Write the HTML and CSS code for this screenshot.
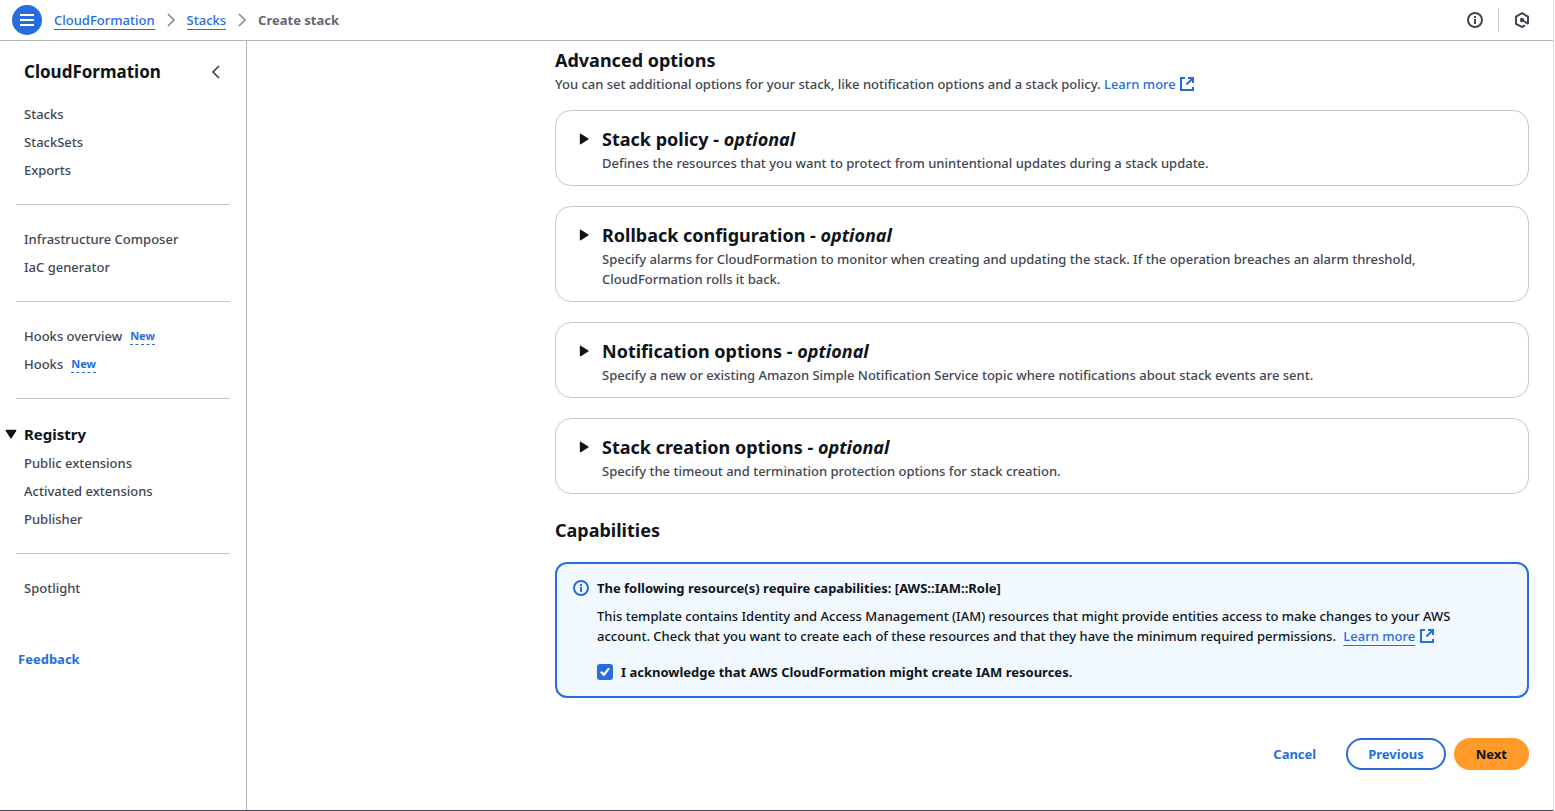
FILE: index.html
```html
<!DOCTYPE html>
<html lang="en">
<head>
<meta charset="utf-8">
<title>Create stack - CloudFormation</title>
<link rel="stylesheet" href="styles.css">
</head>
<body>
<svg class="sprite" aria-hidden="true">
  <symbol id="external" viewBox="0 0 16 16"><path d="M6 2H2v12h12v-3M9 2h5v5M14 2L7.500 8.500" fill="none" stroke="currentColor" stroke-width="2"/></symbol>
  <symbol id="info" viewBox="0 0 16 16"><circle cx="8" cy="8" r="7" fill="none" stroke="currentColor" stroke-width="2"/><path d="M8 7v5M8 4v2" fill="none" stroke="currentColor" stroke-width="2"/></symbol>
  <symbol id="chevron" viewBox="0 0 16 16"><path d="M5 2l6 6-6 6" fill="none" stroke="currentColor" stroke-width="1.700"/></symbol>
  <symbol id="caret" viewBox="0 0 16 16"><path d="M4 2.500v11L12.500 8z" fill="currentColor" stroke="currentColor" stroke-width="1.500" stroke-linejoin="round"/></symbol>
</svg>
<div class="app">
  <header class="topbar">
    <button class="menu-button" aria-label="Open menu"><svg viewBox="0 0 16 16"><path d="M1 3h14M1 8h14M1 13h14" fill="none" stroke="currentColor" stroke-width="2"/></svg></button>
    <nav class="crumbs" aria-label="Breadcrumbs">
      <a href="#">CloudFormation</a>
      <svg class="icon"><use href="#chevron"/></svg>
      <a href="#">Stacks</a>
      <svg class="icon"><use href="#chevron"/></svg>
      <span class="current">Create stack</span>
    </nav>
    <div class="tools">
      <button class="icon-button" aria-label="Help"><svg class="icon"><use href="#info"/></svg></button>
      <button class="icon-button divided" aria-label="Assistant"><svg class="icon" viewBox="0 0 16 16"><path d="M11 13.500L8 15 2 12V4.500L8 1.200l6 3.300V12" fill="none" stroke="currentColor" stroke-width="2"/><circle cx="8" cy="8" r="2.200" fill="currentColor"/><path d="M8 8l6.500 4" stroke="currentColor" stroke-width="2"/></svg></button>
    </div>
  </header>
  <div class="body">
    <aside class="sidebar">
      <div class="side-head">
        <h2>CloudFormation</h2>
        <button class="icon-button" aria-label="Close navigation"><svg class="icon flip"><use href="#chevron"/></svg></button>
      </div>
      <nav aria-label="CloudFormation">
        <ul>
          <li><a href="#">Stacks</a></li>
          <li><a href="#">StackSets</a></li>
          <li><a href="#">Exports</a></li>
        </ul>
        <ul>
          <li><a href="#">Infrastructure Composer</a></li>
          <li><a href="#">IaC generator</a></li>
        </ul>
        <ul>
          <li><a href="#">Hooks overview</a><button class="new">New</button></li>
          <li><a href="#">Hooks</a><button class="new">New</button></li>
        </ul>
        <details class="section" open>
          <summary><svg class="icon"><use href="#caret"/></svg>Registry</summary>
          <ul>
            <li><a href="#">Public extensions</a></li>
            <li><a href="#">Activated extensions</a></li>
            <li><a href="#">Publisher</a></li>
          </ul>
        </details>
        <ul>
          <li><a href="#">Spotlight</a></li>
        </ul>
      </nav>
      <a class="feedback" href="#">Feedback</a>
    </aside>
    <main class="content">
      <h2>Advanced options</h2>
      <p class="lead">You can set additional options for your stack, like notification options and a stack policy. <a href="#">Learn more <svg class="icon"><use href="#external"/></svg></a></p>
      <div class="cards">
        <details class="card"><summary><svg class="icon"><use href="#caret"/></svg><div><h3>Stack policy - <i>optional</i></h3><p>Defines the resources that you want to protect from unintentional updates during a stack update.</p></div></summary></details>
        <details class="card"><summary><svg class="icon"><use href="#caret"/></svg><div><h3>Rollback configuration - <i>optional</i></h3><p>Specify alarms for CloudFormation to monitor when creating and updating the stack. If the operation breaches an alarm threshold, CloudFormation rolls it back.</p></div></summary></details>
        <details class="card"><summary><svg class="icon"><use href="#caret"/></svg><div><h3>Notification options - <i>optional</i></h3><p>Specify a new or existing Amazon Simple Notification Service topic where notifications about stack events are sent.</p></div></summary></details>
        <details class="card"><summary><svg class="icon"><use href="#caret"/></svg><div><h3>Stack creation options - <i>optional</i></h3><p>Specify the timeout and termination protection options for stack creation.</p></div></summary></details>
      </div>
      <h2>Capabilities</h2>
      <section class="alert">
        <svg class="icon"><use href="#info"/></svg>
        <div class="alert-body">
          <h4>The following resource(s) require capabilities: [AWS::IAM::Role]</h4>
          <p>This template contains Identity and Access Management (IAM) resources that might provide entities access to make changes to your AWS account. Check that you want to create each of these resources and that they have the minimum required permissions. <a href="#">Learn more<svg class="icon"><use href="#external"/></svg></a></p>
          <div class="check"><input type="checkbox" id="ack" checked><label for="ack">I acknowledge that AWS CloudFormation might create IAM resources.</label></div>
        </div>
      </section>
      <div class="actions">
        <button class="btn link">Cancel</button>
        <button class="btn outline">Previous</button>
        <button class="btn primary">Next</button>
      </div>
    </main>
  </div>
</div>
</body>
</html>
```
FILE: styles.css
```css
* { box-sizing: border-box; }
body, h2, h3, h4, p, ul { margin: 0; padding: 0; }
html, body { height: 100%; }
body {
  font: 500 13px/20px "Noto Sans", "Open Sans", sans-serif;
  color: #424650;
  background: #fff;
}
button { font: inherit; border: 0; background: none; padding: 0; color: inherit; }
a { color: #276de0; text-decoration: none; }
ul { list-style: none; }
summary { list-style: none; }
.sprite { position: absolute; width: 0; height: 0; }
.icon { width: 16px; height: 16px; flex: none; display: block; }
.flip { transform: scaleX(-1); }

.app {
  min-height: 100%;
  display: flex;
  flex-direction: column;
  margin-right: 1px;
  border-right: 1px solid #dedee3;
  border-bottom: 1px solid #424650;
}
.topbar {
  display: flex;
  align-items: center;
  height: 41px;
  padding: 0 23px 0 12px;
  border-bottom: 1px solid #b4b4bb;
}
.menu-button {
  width: 30px;
  height: 30px;
  border-radius: 50%;
  background: #276de0;
  color: #fff;
  display: grid;
  place-items: center;
}
.menu-button svg { width: 16px; height: 16px; }
.crumbs { display: flex; align-items: center; gap: 8px; margin-left: 12px; }
.crumbs a { border-bottom: 1px solid; line-height: 18px; }
.crumbs .icon { color: #8c8c94; }
.current { font-weight: 700; color: #656871; }
.tools { display: flex; align-items: center; margin-left: auto; gap: 15px; }
.divided { border-left: 1px solid #c6c6cd; padding: 4px 0 4px 15px; }

.body { flex: 1; display: flex; }
.sidebar { width: 247px; flex: none; border-right: 1px solid #b4b4bb; padding-top: 19px; }
.side-head { display: flex; justify-content: space-between; align-items: center; padding: 0 22px 0 24px; }
.side-head h2 { font-size: 17px; line-height: 24px; color: #0f141a; }
.sidebar nav { padding: 16px 16px 0; }
.sidebar nav > * + * { border-top: 1px solid #c6c6cd; margin-top: 20px; padding-top: 20px; }
.sidebar li { display: flex; gap: 8px; align-items: center; height: 28px; padding-left: 8px; }
.sidebar li a { color: #424650; }
.new { font-size: 11px; line-height: 16px; font-weight: 700; color: #276de0; border-bottom: 1px dashed; }
.section summary { display: flex; align-items: center; gap: 5px; margin-left: -13px; height: 30px; font-size: 15px; font-weight: 700; color: #0f141a; }
.section summary .icon { width: 16px; height: 14px; transform: rotate(90deg); }
.feedback { display: inline-block; margin: 47px 18px; font-weight: 700; }

.content { flex: 1; min-width: 0; padding: 7px 24px 40px 308px; }
.content h2, .content h3 { font-size: 18px; line-height: 24px; color: #0f141a; }
.lead { margin-top: 2px; }
.content p .icon { display: inline-block; vertical-align: -3px; }
.content p a { white-space: nowrap; }
.cards { display: grid; gap: 20px; margin: 16px 0 24px; }
.card { border: 1px solid #c6c6cd; border-radius: 16px; }
.card summary { display: flex; gap: 10px; padding: 16px 20px 12px; }
.card summary > .icon { height: 14px; margin-top: 5px; color: #0f141a; }
.card p { margin-top: 2px; }
.alert {
  display: flex;
  gap: 8px;
  margin-top: 20px;
  padding: 14px 16px;
  border: 2px solid #276de0;
  border-radius: 12px;
  background: #f1f9ff;
  color: #0f141a;
}
.alert > .icon { color: #276de0; margin-top: 2px; }
.alert-body { padding-right: 16px; }
.alert h4 { font-size: 13px; }
.alert p { margin-top: 8px; }
.alert a { margin-left: 4px; text-decoration: underline; text-underline-offset: 4px; }
.alert a .icon { margin-left: 4px; }
.check { display: flex; align-items: center; gap: 8px; margin-top: 16px; font-weight: 700; }
.check input {
  appearance: none;
  width: 16px;
  height: 16px;
  margin: 0;
  border-radius: 3px;
  background: #276de0;
  display: grid;
  place-items: center;
}
.check input:checked::before {
  content: "";
  width: 10px;
  height: 9px;
  background: #fff;
  clip-path: polygon(0 56%, 15% 38%, 38% 62%, 84% 0, 100% 14%, 40% 100%);
}
.actions { display: flex; justify-content: flex-end; gap: 8px; margin-top: 40px; }
.btn { height: 32px; padding: 0 20px; border: 2px solid transparent; border-radius: 16px; font-weight: 700; }
.link, .outline { color: #276de0; }
.outline { border-color: #276de0; }
.primary { background: #ff9a2b; color: #0f141a; }
```
